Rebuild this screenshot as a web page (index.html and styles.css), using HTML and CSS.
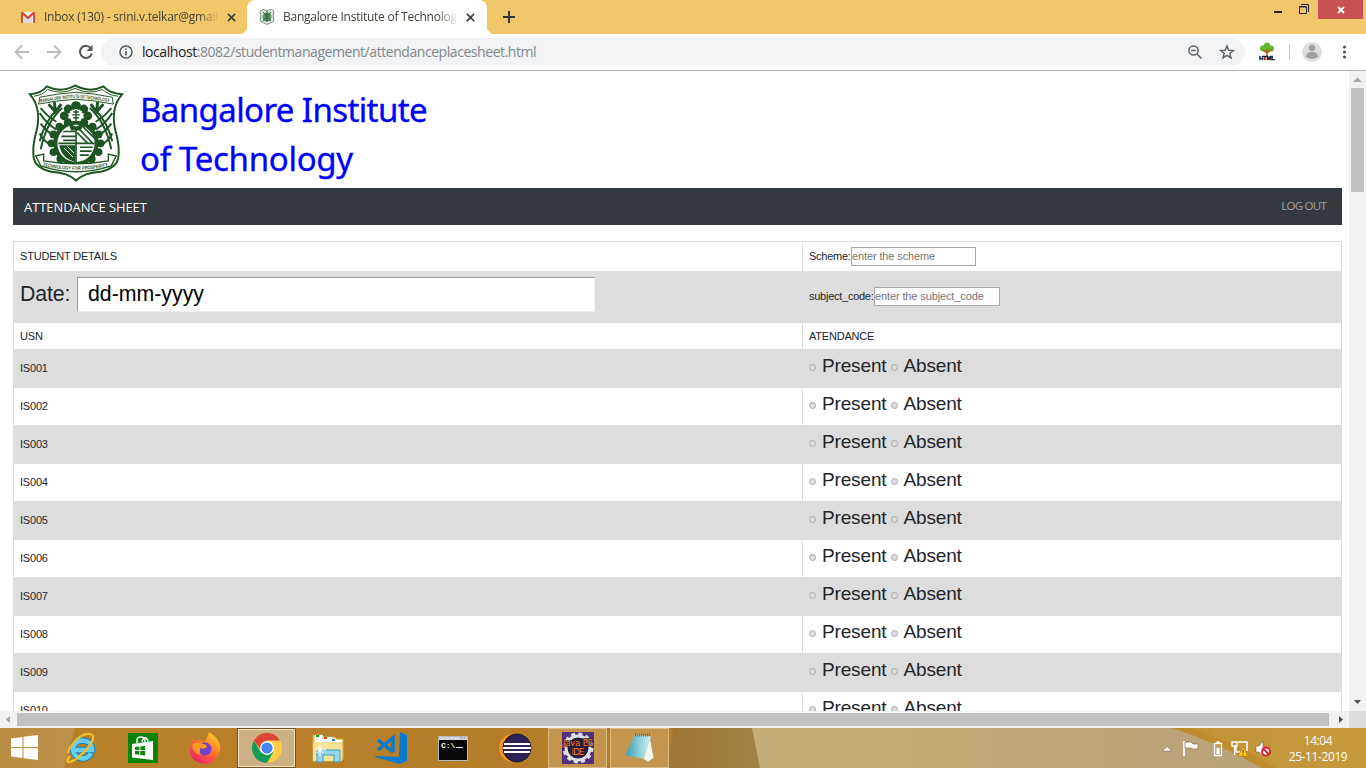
FILE: index.html
```html
<!DOCTYPE html>
<html lang="en">
<head>
<meta charset="utf-8">
<title>Bangalore Institute of Technology</title>
<link rel="stylesheet" href="styles.css">
</head>
<body>
<svg class="defs" width="0" height="0">
  <defs>
    <symbol id="crest" viewBox="0 0 100 100">
      <path d="M3 10Q15 9 20 2Q35 9 49 1Q64 9 78 2Q84 9 97 10Q84 25 91 50Q95 65 93 76Q90 86 75 89Q58 90 50 98Q42 90 25 89Q10 86 7 76Q5 65 9 50Q16 25 3 10Z" fill="#fff" stroke="#1d5421" stroke-width="2"/>
      <path d="M7 12Q16 11 21 5Q35 11 49 4Q64 11 77 5Q83 11 93 12" fill="none" stroke="#1d5421" stroke-width="1"/>
      <path d="M13 13Q32 9 50 8Q68 9 87 13L88 20Q68 16 50 15Q32 16 12 20Z" fill="#fff" stroke="#1d5421"/>
      <g fill="none" stroke="#1d5421" stroke-width="2">
        <path d="M14 24Q20 32 30 38M13 29Q20 40 30 46M14 40Q20 48 27 52M13 50Q17 58 25 62M36 24Q20 38 14 66M31 25Q18 38 13 58M86 24Q80 32 70 38M87 29Q80 40 70 46M86 40Q80 48 73 52M87 50Q83 58 75 62M64 24Q80 38 86 66M69 25Q82 38 87 58"/>
        <path d="M22 20L29 28L35 20M28 18L29 30M78 20L71 28L65 20M72 18L71 30" stroke-width="3"/>
      </g>
      <g fill="#1d5421">
        <circle cx="50" cy="22" r="5"/><circle cx="42" cy="25" r="4.500"/><circle cx="58" cy="25" r="4.500"/><circle cx="38" cy="32" r="4.500"/><circle cx="62" cy="32" r="4.500"/><circle cx="42" cy="39" r="4.500"/><circle cx="58" cy="39" r="4.500"/>
        <circle cx="33" cy="43" r="4"/><circle cx="67" cy="43" r="4"/><circle cx="27" cy="51" r="4"/><circle cx="73" cy="51" r="4"/><circle cx="25" cy="60" r="4"/><circle cx="75" cy="60" r="4"/><circle cx="27" cy="69" r="4"/><circle cx="73" cy="69" r="4"/><circle cx="34" cy="76" r="4"/><circle cx="66" cy="76" r="4"/><circle cx="42" cy="79" r="4"/><circle cx="58" cy="79" r="4"/>
      </g>
      <circle cx="50" cy="60" r="21" fill="#fff" stroke="#1d5421" stroke-width="4"/>
      <g fill="none" stroke="#1d5421" stroke-width="1.700">
        <path d="M50 43V79M32 60H69M37 48H49M35 53H49M37 57H49M51 43L68 61M55 41L69 55M60 42L68 49M51 49L62 60M54 64H67M54 68H66M54 72H63"/>
      </g>
      <path d="M33 62H49V79Q35 75 33 62ZM42 39L50 43L58 39L55 47H45Z" fill="#1d5421"/>
      <path d="M38 65L47 74M41 63L48 70" stroke="#fff"/>
      <path d="M44 27L50 25L56 27L55 37H45Z" fill="#fff"/><path d="M47 28H53M46 31H54M47 34H53M50 26V38" stroke="#1d5421" stroke-width="1.500"/>
      <path d="M9 73L17 71V78Q33 81 50 81Q67 81 83 78V71L91 73L86 83Q68 89 50 89Q32 89 14 83Z" fill="#fff" stroke="#1d5421" stroke-width="1.400"/>
      <path id="crest-top" d="M13.500 18.500Q32 14.800 50 13.700Q68 14.800 87 18.500" fill="none"/>
      <path id="crest-bottom" d="M16 83Q32 87 50 87Q68 87 84 83" fill="none"/>
      <g class="crest-text"><text><textPath href="#crest-top" textLength="71" lengthAdjust="spacingAndGlyphs">BANGALORE INSTITUTE OF TECHNOLOGY</textPath></text>
      <text><textPath href="#crest-bottom" textLength="67" lengthAdjust="spacingAndGlyphs">TECHNOLOGY FOR PROSPERITY</textPath></text></g>
    </symbol>
    <symbol id="close" viewBox="0 0 10 10"><path d="M1 1L9 9M9 1L1 9" stroke="#3c4043" stroke-width="1.9"/></symbol>
  </defs>
</svg>
<div class="screen">
  <header class="tabstrip">
    <div class="tab tab-inactive">
      <svg class="favicon" viewBox="0 0 16 16"><path d="M1 3H15V14H1Z" fill="#eee"/><path d="M4 14V7L8 10L12 7V14Z" fill="#ddd"/><path d="M1 14V3H3L8 7.5L13 3H15V14H13V6L8 10.5L3 6V14Z" fill="#d54b3d"/></svg>
      <span class="tab-title">Inbox (130) - srini.v.telkar@gmail</span>
      <svg class="tab-close"><use href="#close"/></svg>
    </div>
    <div class="tab tab-active">
      <svg class="favicon" viewBox="0 0 16 16"><path d="M1 2L4 .5L8 1.5L12 .5L15 2L14 7L15 12L11 14L8 15.5L5 14L1 12L2 7Z" fill="#dfe6df" stroke="#829785"/><circle cx="8" cy="8" r="4.5" fill="#5f9168"/><path d="M4 3L12 12M12 3L4 12M8 2V13" stroke="#28633c"/></svg>
      <span class="tab-title">Bangalore Institute of Technology</span>
      <svg class="tab-close"><use href="#close"/></svg>
    </div>
    <svg class="new-tab" viewBox="0 0 12 12"><path d="M6 0V12M0 6H12" stroke="#333" stroke-width="2"/></svg>
    <div class="window-controls">
      <svg width="36" height="19"><path d="M15 12H23" stroke="#222" stroke-width="2"/></svg>
      <svg class="restore" width="10" height="10"><path d="M.5 2.5H7.5V9.5H.5Z M2 .5H9.5V8" fill="none" stroke="#222"/><path d="M1 3H7" stroke="#222"/></svg>
      <div class="window-close"><svg width="8" height="8"><path d="M1 1L7 7M7 1L1 7" stroke="#fff" stroke-width="1.8"/></svg></div>
    </div>
  </header>
  <div class="toolbar">
    <svg class="nav-icons" width="108" height="36" fill="none" stroke-width="1.8"><path d="M29 18H16M22 11.5L15.5 18L22 24.5M47 18H60M54 11.5L60.500 18L54 24.500" stroke="#bbb"/><path d="M91 14.500A6 6 0 1 0 91.800 19.500" stroke="#505357" stroke-width="2"/><path d="M92.500 11V17H86.500Z" fill="#505357"/></svg>
    <div class="omnibox">
      <svg class="info" width="14" height="14"><circle cx="7" cy="7" r="6" fill="none" stroke="#55595d" stroke-width="1.5"/><path d="M7 6V10.500M7 3.500V5" stroke="#55595d" stroke-width="1.6"/></svg>
      <span class="url"><b>localhost</b>:8082/studentmanagement/attendanceplacesheet.html</span>
      <svg class="omni-actions" width="50" height="28" fill="none" stroke="#5f6368" stroke-width="1.500"><circle cx="6.500" cy="12.500" r="4.600"/><path d="M10 16L14.500 20.500M4.200 12.500H8.800"/><path d="M40 8L41.800 12.200L46.300 12.500L42.800 15.400L44 19.800L40 17.400L36 19.800L37.200 15.400L33.700 12.500L38.200 12.200Z"/></svg>
    </div>
    <svg class="tool-right" width="121" height="36"><g fill="#62b82b"><circle cx="22" cy="14" r="4"/><circle cx="18" cy="14.500" r="3"/><circle cx="26" cy="14.500" r="3"/><circle cx="22" cy="11.500" r="3"/></g><path d="M22 15V22M22 19L18 16M22 19L26 16" stroke="#aa5a12" stroke-width="1.500"/><text class="html-badge" x="14" y="25.500" textLength="16">HTML</text><path d="M44.500 10V26" stroke="#ccc"/><circle cx="67" cy="18" r="10" fill="#dedede"/><circle cx="67" cy="14" r="3.200" fill="#a0a0a0"/><path d="M61 23Q61 18 67 18Q73 18 73 23Q67 27 61 23Z" fill="#a0a0a0"/><g fill="#505357"><circle cx="99.500" cy="13" r="1.600"/><circle cx="99.500" cy="18" r="1.600"/><circle cx="99.500" cy="23" r="1.600"/></g></svg>
  </div>
  <div class="viewport">
    <main class="page">
      <div class="brand"><svg class="crest"><use href="#crest"/></svg><h1>Bangalore Institute<br><span>of Technology</span></h1></div>
      <nav class="navbar"><span class="nav-title">ATTENDANCE SHEET</span><span class="logout">LOG OUT</span></nav>
      <div class="sheet">
        <div class="row row-details"><div class="cell">STUDENT DETAILS</div><div class="cell"><span class="label scheme">Scheme:</span><input class="field" placeholder="enter the scheme"></div></div>
        <div class="row row-date"><div class="cell"><span class="date-label">Date:</span><div class="date-input">dd-mm-yyyy</div></div><div class="cell"><span class="label code">subject_code:</span><input class="field" placeholder="enter the subject_code"></div></div>
        <div class="row row-head"><div class="cell">USN</div><div class="cell">ATENDANCE</div></div>
        <div class="row student"><div class="cell">IS001</div><div class="cell choice"><i></i><span class="present">Present</span><i></i><span>Absent</span></div></div>
        <div class="row student"><div class="cell">IS002</div><div class="cell choice"><i></i><span class="present">Present</span><i></i><span>Absent</span></div></div>
        <div class="row student"><div class="cell">IS003</div><div class="cell choice"><i></i><span class="present">Present</span><i></i><span>Absent</span></div></div>
        <div class="row student"><div class="cell">IS004</div><div class="cell choice"><i></i><span class="present">Present</span><i></i><span>Absent</span></div></div>
        <div class="row student"><div class="cell">IS005</div><div class="cell choice"><i></i><span class="present">Present</span><i></i><span>Absent</span></div></div>
        <div class="row student"><div class="cell">IS006</div><div class="cell choice"><i></i><span class="present">Present</span><i></i><span>Absent</span></div></div>
        <div class="row student"><div class="cell">IS007</div><div class="cell choice"><i></i><span class="present">Present</span><i></i><span>Absent</span></div></div>
        <div class="row student"><div class="cell">IS008</div><div class="cell choice"><i></i><span class="present">Present</span><i></i><span>Absent</span></div></div>
        <div class="row student"><div class="cell">IS009</div><div class="cell choice"><i></i><span class="present">Present</span><i></i><span>Absent</span></div></div>
        <div class="row student"><div class="cell">IS010</div><div class="cell choice"><i></i><span class="present">Present</span><i></i><span>Absent</span></div></div>
      </div>
    </main>
    <div class="vscroll"><svg width="17" height="17"><path d="M4 11L8.500 6.500L13 11Z" fill="#a3a3a3"/></svg><div class="vthumb"></div><svg class="down" width="17" height="17"><path d="M5 6H12L8.500 10Z" fill="#505050"/></svg></div>
  </div>
  <div class="hscroll"><svg width="17" height="17"><path d="M10 5V12L6 8.500Z" fill="#a3a3a3"/></svg><div class="hthumb"></div><svg width="20" height="17"><path d="M10 5V12L14 8.500Z" fill="#505050"/></svg><div class="corner"></div></div>
  <footer class="taskbar">
    <svg class="wallpaper" width="1366" height="40">
      <defs>
        <linearGradient id="w1"><stop stop-color="#b88c42"/><stop offset="1" stop-color="#bc914b"/></linearGradient>
        <linearGradient id="w2"><stop stop-color="#b88029"/><stop offset="1" stop-color="#b27927"/></linearGradient>
        <linearGradient id="w3"><stop stop-color="#a07535"/><stop offset="1" stop-color="#9f8343"/></linearGradient>
        <linearGradient id="w4"><stop stop-color="#c5ad79"/><stop offset=".45" stop-color="#c0a676"/><stop offset="1" stop-color="#b79f7a"/></linearGradient>
        <linearGradient id="w5"><stop stop-color="#bf9236"/><stop offset="1" stop-color="#c59b3c"/></linearGradient>
      </defs>
      <path d="M0 0H1366V40H0Z" fill="url(#w2)"/><path d="M0 0H75L64 40H0Z" fill="url(#w1)"/>
      <path d="M673 0H752L760 40H668Z" fill="url(#w3)"/><path d="M752 0H1366V40H760Z" fill="url(#w4)"/>
      <path d="M1173 0H1366V40H1264Q1226 18 1173 0Z" fill="url(#w5)"/><path d="M1173 0H1192Q1240 17 1276 40H1262Q1222 17 1173 0Z" fill="#be8c2d"/>
    </svg>
    <div class="task start"><svg width="28" height="28"><path d="M0 4.500L11.500 3V13H0ZM12.500 2.800L27 1V13H12.500ZM0 14H11.500V24L0 22.500ZM12.500 14H27V26L12.500 24.200Z" fill="#fff"/></svg></div>
    <div class="task ie"><svg width="32" height="32" fill="none"><path d="M26 21.500C21 30 8 27 8 17C8 6 27 5 27 18H9" stroke="#1681bd" stroke-width="6.500"/><path d="M26 21.500C21 30 8 27 8 17C8 6 27 5 27 18H9" stroke="#65cff5" stroke-width="4.500"/><path d="M5 24C-3 34 9 31 19 20C28 11 31 3 25 2C17 1 6 10 3 21" stroke="#f4bf22" stroke-width="2.200"/></svg></div>
    <div class="task store"><svg width="30" height="30"><path d="M0 0H30V30H0Z" fill="#088408"/><path d="M4 11L25 8V27L4 24.500Z" fill="#fff"/><path d="M9 10V7Q9 4 13 4Q17 4 17 9M14 9Q15 4 18 5Q20 6 20 9" fill="none" stroke="#fff" stroke-width="1.500"/><path d="M7 14L11.300 13.500V17H7ZM12.300 13.400L17 13V17H12.300ZM7 18H11.300V21.800L7 21.300ZM12.300 18H17V22.500L12.300 22Z" fill="#088408"/></svg></div>
    <div class="task firefox"><svg width="32" height="32"><defs><linearGradient id="fire" x1="1" y1="0" x2=".3" y2="1"><stop stop-color="#ffe32e"/><stop offset=".5" stop-color="#ff7b29"/><stop offset="1" stop-color="#ef2168"/></linearGradient></defs><path d="M20 0Q29 6 29 10L28 7Q34 16 29 24Q25 32 16 32Q5 31 1 22Q0 12 5 6L6 10L8 8Q13 7 14 11Q18 8 20 0Z" fill="url(#fire)"/><circle cx="16" cy="17" r="6.500" fill="#6f42cf"/><path d="M3 13Q6 9 14 12Q18 13 18 15Q14 18 11 16Q10 20 12 23Q4 22 3 13Z" fill="#ff9a23"/></svg></div>
    <div class="task chrome selected"><svg width="30" height="30"><circle cx="15" cy="15" r="15" fill="#ffce44"/><path d="M2 7.500L8.500 18.700H21.500L15 30A15 15 0 0 1 2 7.500Z" fill="#119d58"/><path d="M2 7.500A15 15 0 0 1 28 7.500H15L9 17Z" fill="#db4437"/><circle cx="15" cy="15" r="7" fill="#fff"/><circle cx="15" cy="15" r="5.600" fill="#4285f4"/></svg></div>
    <div class="task folder"><svg width="32" height="30"><path d="M1 2H10L12 4H23L25 6H31V26L29 28H1Z" fill="#f2dc8b" stroke="#d4ac4e"/><path d="M3 2H11V4H20V7H30V9H3Z" fill="#fff"/><path d="M1 9H19L21 11H30V28H1Z" fill="#f4e297"/><path d="M4 3H7" stroke-width="2" stroke="#08a32a"/><path d="M12 5H15" stroke="#d8492f" stroke-width="2"/><path d="M20 7H23" stroke="#2487d4" stroke-width="2"/><path d="M5 17H28V29H22V22H11V29H5Z" fill="#93d6ee" stroke="#409dc5"/><path d="M8 12V23M3 17H14M5 14L11 20M11 14L5 20" stroke="#fff" stroke-width="1"/></svg></div>
    <div class="task vscode"><svg width="33" height="32"><path d="M25 0L32 3V29L25 32L0 25V24L24 25Z" fill="#087bce"/><path d="M3 8L18 20M3 18L18 6V20" fill="none" stroke="#087bce" stroke-width="3.500"/></svg></div>
    <div class="task terminal"><svg width="30" height="25"><path d="M.5.500H29.500V24.500H.500Z" fill="#080808" stroke="#b7bac1"/><path d="M1 1H29V4H1Z" fill="#d3d6dc"/><path d="M22 2H28" stroke="#66779b" stroke-dasharray="1 1"/><text class="prompt" x="3" y="12">C:\</text><path d="M18 11.500H25" stroke="#fff"/></svg></div>
    <div class="task eclipse"><svg width="33" height="30"><circle cx="14" cy="15" r="14" fill="#f79420"/><circle cx="18" cy="15" r="14" fill="#2c2255" stroke="#17172a"/><path d="M5 11H31M4 15H32M5 19H31" stroke="#fff" stroke-width="2"/></svg></div>
    <div class="task jee selected muted"><svg width="32" height="32"><path d="M0 0H32V32H0Z" fill="#51307a"/><circle cx="16" cy="16" r="12" fill="#252039" stroke="#dedee2" stroke-width="3"/><circle cx="16" cy="16" r="14" fill="none" stroke="#dedee2" stroke-width="3" stroke-dasharray="4 3.330"/><g class="ide"><text x="1" y="14" textLength="30" lengthAdjust="spacingAndGlyphs">Java EE</text><text x="9.500" y="23" textLength="13">IDE</text></g></svg></div>
    <div class="task notepad selected muted"><svg width="31" height="30"><defs><linearGradient id="note"><stop stop-color="#389db1"/><stop offset="1" stop-color="#d5f3f5"/></linearGradient></defs><path d="M26 4L30 25L24 29L19 26Z" fill="#f5f5e9" stroke="#b5a787"/><path d="M11 2L27 3L20 26L1 22Z" fill="url(#note)"/><path d="M11 2H27" stroke="#61706c" stroke-width="3" stroke-dasharray="1 1"/></svg></div>
    <div class="tray">
      <svg width="114" height="28" fill="none" stroke="#fff"><path d="M1.500 17L6 12.500L10.500 17Z" fill="#fff" stroke="#75613d" stroke-width=".5"/><path d="M23 7V22" stroke-width="1.800"/><path d="M24 8H30L32 10H37V15H32L30 14H24Z" fill="#fff" stroke="#6f5931" stroke-width=".6"/><path d="M53.500 9.500H60.500V21.500H53.500ZM55.500 8H58.500" stroke-width="1.300"/><path d="M55.500 14H58.500V20H55.500Z" fill="#fff" stroke="none"/><path d="M77 8H86V17M75 11V18H79" stroke-width="1.500"/><path d="M71 8H76V12H71ZM73.500 12V21" stroke-width="1.300"/><path d="M82 13L87 22H77Z" fill="#ffc61b" stroke="#ab750d" stroke-width=".5"/><path d="M82 16V19M82 20V21" stroke="#332d1c"/><path d="M95 12H98L102 7V22L98 18H95Z" fill="#fff" stroke="#6f5931" stroke-width=".6"/><circle cx="105" cy="17.500" r="4" fill="#fff" stroke="#dc1c2e" stroke-width="1.800"/><path d="M102 14.500L108 20.500" stroke="#dc1c2e" stroke-width="1.800"/></svg>
      <div class="clock"><div class="time">14:04</div><div class="date">25-11-2019</div></div>
    </div>
  </footer>
</div>
</body>
</html>
```
FILE: styles.css
```css
* { box-sizing: border-box; }
body { margin: 0; background: #fff; font-family: "Liberation Sans", sans-serif; }
svg { display: block; flex-shrink: 0; }
.defs { position: absolute; }
.crest-text { font: bold 5px "Liberation Sans", sans-serif; fill: #1d5421; }
.screen { width: 1366px; height: 768px; overflow: hidden; display: flex; flex-direction: column; }
.tabstrip { height: 34px; background: #f0c869; display: flex; flex-shrink: 0; }
.tab { height: 34px; display: flex; align-items: center; font: 12px/20px "Open Sans", sans-serif; color: #444036; }
.tab-inactive { width: 247px; padding-left: 20px; }
.tab-active { width: 240px; padding-left: 12px; background: #fff; border-radius: 8px 8px 0 0; position: relative; }
.tab-active::before, .tab-active::after { content: ""; position: absolute; bottom: 0; width: 8px; height: 8px; }
.tab-active::before { left: -8px; background: radial-gradient(circle at 0 0, #f0c869 8px, #fff 8.500px); }
.tab-active::after { right: -8px; background: radial-gradient(circle at 100% 0, #f0c869 8px, #fff 8.500px); }
.favicon { width: 16px; height: 16px; margin-right: 8px; }
.tab-title { width: 175px; overflow: hidden; white-space: nowrap; letter-spacing: -.25px; -webkit-mask-image: linear-gradient(90deg, #000 88%, transparent); }
.tab-inactive .tab-title { letter-spacing: -.23px; }
.tab-close { width: 9px; height: 9px; margin-left: 8px; }
.new-tab { width: 12px; height: 12px; margin: 11px 0 0 16px; }
.window-controls { display: flex; margin-left: auto; }
.restore { margin: 4px 9px 0 4px; }
.window-close { width: 45px; height: 19px; background: #c75050; margin-right: 3px; display: grid; place-items: center; }
.toolbar { height: 37px; border-bottom: 1px solid #b4b4b4; display: flex; align-items: center; flex-shrink: 0; }
.omnibox { width: 1144px; height: 28px; border-radius: 14px; background: #f1f3f4; display: flex; align-items: center; margin-left: -7px; }
.info { margin: 0 9px 0 18px; }
.url { font: 14px/20px "Open Sans", sans-serif; color: #80868b; letter-spacing: -.44px; white-space: nowrap; }
.url b { font-weight: 400; color: #222; }
.omni-actions { margin-left: auto; margin-right: 8px; }
.html-badge { font: bold 6px "Liberation Sans", sans-serif; stroke: #000; stroke-width: .3px; }
.viewport { height: 640px; display: flex; flex-shrink: 0; }
.page { width: 1349px; padding: 13px 7px 0 13px; overflow: hidden; }
.brand { height: 104px; display: flex; }
.crest { width: 98px; height: 99px; margin-left: 14px; }
h1 { margin: 1px 0 0 15px; font: 33px/49px "Noto Sans", sans-serif; color: #00f; white-space: nowrap; letter-spacing: -.6px; -webkit-text-stroke: .35px #00f; }
h1 span { letter-spacing: -.3px; }
.navbar { height: 37px; background: #343a40; color: #fff; display: flex; justify-content: space-between; padding: 0 16px 0 11px; font-family: "Open Sans", sans-serif; }
.nav-title { font-size: 13px; line-height: 38px; letter-spacing: -.08px; }
.logout { font-size: 11.500px; line-height: 36px; color: #a5a5a5; letter-spacing: -.75px; }
.sheet { margin-top: 16px; width: 1329px; border: solid #ddd; border-width: 0 1px; font-size: 11px; letter-spacing: -.2px; color: #212529; }
.row { display: flex; border-top: 1px solid #ddd; }
.row:nth-child(even) { background: #ddd; }
.cell { width: 788px; padding-left: 6px; display: flex; align-items: center; white-space: nowrap; }
.cell + .cell { width: 539px; border-left: 1px solid #ddd; }
.row-details { height: 30px; }
.row-details .cell:first-child { padding-bottom: 2px; }
.row-date { height: 51px; }
.row-head { height: 27px; }
.student { height: 38px; }
.student .cell:first-child { padding-bottom: 2px; }
.label { padding-bottom: 1px; }
.scheme { width: 42px; letter-spacing: -.25px; }
.code { width: 65px; letter-spacing: -.26px; }
.field { width: 125px; height: 19px; margin: 0; padding: 0 0 1px; border: 1px solid #a9a9a9; background: #fff; font: 11px "Liberation Sans", sans-serif; letter-spacing: -.12px; }
.row-date .field { width: 126px; margin-bottom: 1px; }
.row-date .label { margin-bottom: 1px; }
.field::placeholder { color: #757575; }
.date-label { font-size: 21.300px; width: 57px; margin-top: -6px; letter-spacing: -.1px; }
.date-input { width: 518px; height: 35px; background: #fff; border: 1px solid; border-color: #999 #eee #eee #999; padding-left: 10px; font-size: 21.300px; line-height: 33px; letter-spacing: 0; color: #000; margin-top: -6px; }
.choice { font-size: 19px; letter-spacing: -.15px; padding-bottom: 6px; }
.choice i { width: 7px; height: 7px; border: 1px solid #aaa; border-radius: 50%; background: #ddd; margin: 4px 6px 0 0; }
.choice .present { width: 69px; }
.choice i + span:last-child { margin-left: -.5px; }
.vscroll { width: 17px; background: #f1f1f1; display: flex; flex-direction: column; }
.vthumb { width: 13px; height: 104px; margin-left: 2px; background: #c1c1c1; }
.down { margin-top: auto; }
.hscroll { height: 17px; background: #f1f1f1; display: flex; align-items: center; flex-shrink: 0; }
.hthumb { width: 1312px; height: 13px; background: #c1c1c1; }
.corner { width: 17px; height: 17px; background: #dcdcdc; }
.taskbar { height: 40px; display: flex; flex-shrink: 0; position: relative; isolation: isolate; box-shadow: inset 0 1px #a17a36; }
.wallpaper { position: absolute; inset: 0; z-index: -1; }
.task { display: flex; align-items: center; justify-content: center; width: 58px; height: 40px; flex-shrink: 0; }
.start { width: 50px; }
.ie { width: 61px; padding-bottom: 1px; }
.store { width: 63px; }
.firefox { width: 63px; padding: 0 2px 1px 0; }
.folder { width: 64px; padding-bottom: 1px; }
.vscode { width: 62px; }
.terminal { width: 62px; padding-right: 1px; }
.eclipse { width: 64px; padding-right: 2px; }
.selected { width: 59px; height: 40px; background: #cdb184; border: 1px solid #f3e4c5; }
.chrome { box-shadow: inset 0 0 0 1px #f3e4c5; border-color: #755119; }
.muted { background: #c3954f; border-color: #d7b983; }
.notepad { margin-left: 3px; }
.prompt { font: bold 8px "Liberation Mono", monospace; fill: #fff; }
.ide { font: 9.500px "DejaVu Sans", sans-serif; fill: #ff801e; stroke: #2b1735; stroke-width: 1.500px; paint-order: stroke; }
.tray { margin-left: auto; display: flex; padding: 6px 18px 0 0; color: #fff; }
.clock { width: 60px; text-align: center; margin-left: 13px; font: 12px/16px "Open Sans", sans-serif; letter-spacing: -.4px; white-space: nowrap; margin-top: -1px; }
```
